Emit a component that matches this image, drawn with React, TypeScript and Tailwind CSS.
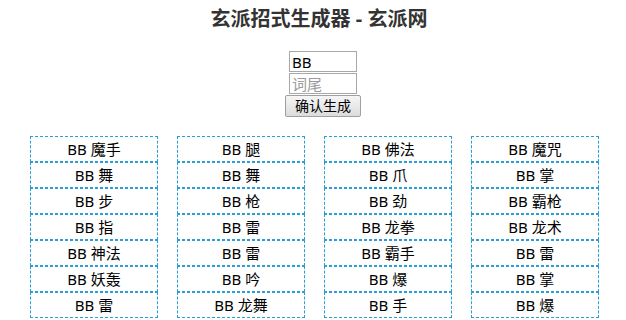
import React from "react";

const cols: string[][] = [
  ["魔手", "舞", "步", "指", "神法", "妖轰", "雷"],
  ["腿", "舞", "枪", "雷", "雷", "吟", "龙舞"],
  ["佛法", "爪", "劲", "龙拳", "霸手", "爆", "手"],
  ["魔咒", "掌", "霸枪", "龙术", "雷", "掌", "爆"],
];

const font = { fontFamily: '"Noto Sans", "Noto Sans CJK SC", sans-serif' };

export default function App() {
  return (
    <div className="w-[626px] h-[320px] overflow-hidden bg-white text-black" style={font}>
      <h1 className="pt-[6px] text-center text-[20px] leading-[26px] font-bold text-[#333] pl-[12px]">
        玄派招式生成器 - 玄派网
      </h1>
      <div className="flex flex-col items-center mt-[19px] pl-[20px]">
        <input
          defaultValue="BB"
          className="w-[68px] h-[21px] border border-[#a8a8a8] px-[2px] text-[15px] leading-[19px] outline-none"
        />
        <input
          placeholder="词尾"
          className="w-[68px] h-[21px] border border-[#a8a8a8] px-[2px] text-[15px] leading-[19px] outline-none mt-[1px] placeholder:text-[#9a9a9a]"
        />
        <button className="mt-[1px] w-[76px] h-[22px] border border-[#a0a0a0] rounded-[2px] bg-gradient-to-b from-[#f6f6f6] to-[#dcdcdc] text-[14px] leading-[18px] text-black">
          确认生成
        </button>
      </div>
      <div className="flex gap-[19px] pl-[30px] mt-[19px]">
        {cols.map((col, i) => (
          <div key={i} className="w-[128px] flex flex-col">
            {col.map((w, j) => (
              <div
                key={j}
                className="h-[26px] border border-dashed border-[#2b9ed8] flex items-center justify-center text-[15px] leading-[20px]"
              >
                BB {w}
              </div>
            ))}
          </div>
        ))}
      </div>
    </div>
  );
}
